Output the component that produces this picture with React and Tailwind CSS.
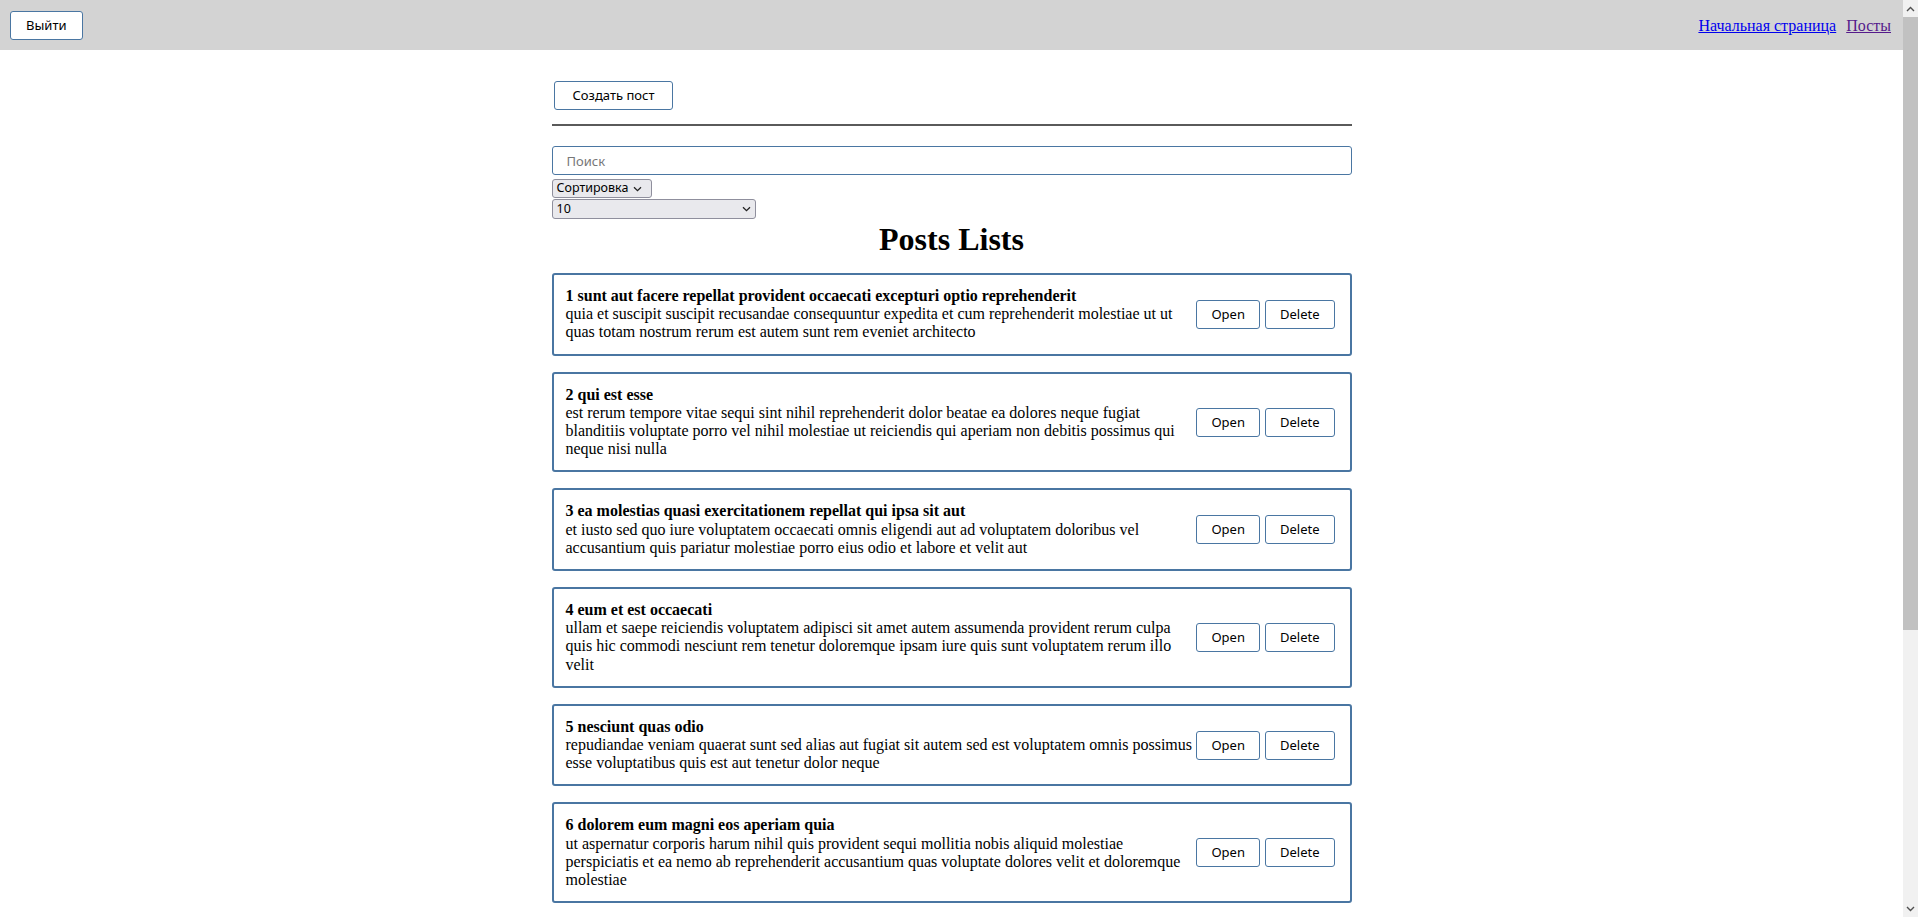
import React from "react";

const posts = [
  {
    id: 1,
    title: "sunt aut facere repellat provident occaecati excepturi optio reprehenderit",
    body: "quia et suscipit suscipit recusandae consequuntur expedita et cum reprehenderit molestiae ut ut quas totam nostrum rerum est autem sunt rem eveniet architecto",
  },
  {
    id: 2,
    title: "qui est esse",
    body: "est rerum tempore vitae sequi sint nihil reprehenderit dolor beatae ea dolores neque fugiat blanditiis voluptate porro vel nihil molestiae ut reiciendis qui aperiam non debitis possimus qui neque nisi nulla",
  },
  {
    id: 3,
    title: "ea molestias quasi exercitationem repellat qui ipsa sit aut",
    body: "et iusto sed quo iure voluptatem occaecati omnis eligendi aut ad voluptatem doloribus vel accusantium quis pariatur molestiae porro eius odio et labore et velit aut",
  },
  {
    id: 4,
    title: "eum et est occaecati",
    body: "ullam et saepe reiciendis voluptatem adipisci sit amet autem assumenda provident rerum culpa quis hic commodi nesciunt rem tenetur doloremque ipsam iure quis sunt voluptatem rerum illo velit",
  },
  {
    id: 5,
    title: "nesciunt quas odio",
    body: "repudiandae veniam quaerat sunt sed alias aut fugiat sit autem sed est voluptatem omnis possimus esse voluptatibus quis est aut tenetur dolor neque",
  },
  {
    id: 6,
    title: "dolorem eum magni eos aperiam quia",
    body: "ut aspernatur corporis harum nihil quis provident sequi mollitia nobis aliquid molestiae perspiciatis et ea nemo ab reprehenderit accusantium quas voluptate dolores velit et doloremque molestiae",
  },
];

const btn =
  "bg-white border border-[#4a76a2] rounded-[3px] text-[13px] font-normal text-black h-[29px] font-['Noto_Sans',sans-serif] leading-none";

function Chevron() {
  return (
    <svg width="9" height="6" viewBox="0 0 9 6" className="ml-[5px]">
      <path d="M1 1.2 L4.5 4.6 L8 1.2" fill="none" stroke="#222" strokeWidth="1.3" />
    </svg>
  );
}

function PostItem({ post }) {
  return (
    <div className="flex items-center border-2 border-[#4a76a2] rounded-[3px] pl-[12px] pr-[15px] py-[12px] mb-[16px] font-['Liberation_Serif',serif] text-[16px] leading-[18.2px] text-black">
      <div className="flex-1">
        <div className="font-bold">
          {post.id} {post.title}
        </div>
        <div>{post.body}</div>
      </div>
      <div className="flex shrink-0 gap-[5px]">
        <button className={btn + " px-[14px]"}>Open</button>
        <button className={btn + " px-[14px]"}>Delete</button>
      </div>
    </div>
  );
}

export default function App() {
  return (
    <div className="flex h-[917px] overflow-hidden bg-white">
      <div className="flex-1 overflow-hidden">
        <div className="h-[50px] bg-[#d3d3d3] flex items-center justify-between pl-[10px] pr-[12px]">
          <button className={btn + " px-[15px] mt-[1px]"}>Выйти</button>
          <div className="flex gap-[10px] font-['Liberation_Serif',serif] text-[16px] mt-[2px]">
            <a href="#" className="text-[#0000ee] underline">
              Начальная страница
            </a>
            <a href="#" className="text-[#551a8b] underline">
              Посты
            </a>
          </div>
        </div>

        <div className="w-[800px] mx-auto pt-[31px]">
          <button className={btn + " ml-[2px] h-[28px] px-[18px]"}>Создать пост</button>
          <div className="mt-[14px] border-t-2 border-[#5a5a5a]" />
          <input
            placeholder="Поиск"
            className="mt-[20px] w-full h-[29px] border border-[#4a76a2] rounded-[3px] px-[14px] text-[13px] font-['Noto_Sans',sans-serif] placeholder:text-[#777] outline-none"
          />
          <div className="mt-[4px] flex flex-col items-start font-['Noto_Sans',sans-serif] text-[12.5px] text-black">
            <div className="h-[19px] w-[100px] flex items-center px-[4px] bg-[#e9e9ed] border border-[#8f8f9d] rounded-[3px]">
              Сортировка
              <Chevron />
            </div>
            <div className="h-[20px] w-[204px] mt-[1px] flex items-center justify-between px-[4px] bg-[#e9e9ed] border border-[#8f8f9d] rounded-[3px]">
              10
              <Chevron />
            </div>
          </div>
          <h1 className="text-center font-['Liberation_Serif',serif] font-bold text-[32px] leading-[37px] mt-[2px] mb-[15px]">
            Posts Lists
          </h1>
          {posts.map((p) => (
            <PostItem key={p.id} post={p} />
          ))}
        </div>
      </div>

      <div className="w-[15px] shrink-0 bg-[#f1f1f1] flex flex-col">
        <div className="h-[17px] flex items-center justify-center">
          <svg width="9" height="6" viewBox="0 0 9 6">
            <path d="M1 5 L4.5 1.5 L8 5" fill="none" stroke="#505050" strokeWidth="1.4" />
          </svg>
        </div>
        <div className="h-[613px] bg-[#c1c1c1]" />
        <div className="flex-1" />
        <div className="h-[17px] flex items-center justify-center">
          <svg width="9" height="6" viewBox="0 0 9 6">
            <path d="M1 1 L4.5 4.5 L8 1" fill="none" stroke="#505050" strokeWidth="1.4" />
          </svg>
        </div>
      </div>
    </div>
  );
}
